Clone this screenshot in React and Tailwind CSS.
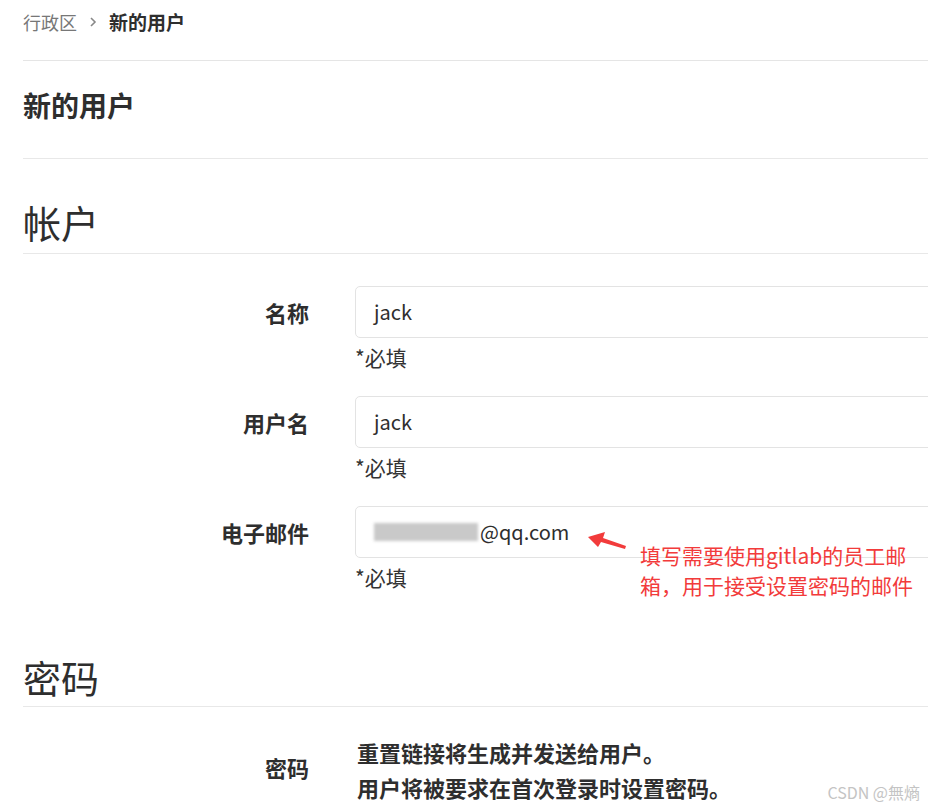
import React from "react";

const font = { fontFamily: '"Noto Sans CJK SC", "Open Sans", sans-serif' };

function Field({ label, children, help }) {
    return (
        <div className="flex items-start">
            <div className="w-[286px] shrink-0 h-[52px] flex items-center justify-end text-[22px] font-bold text-[#2e2e2e]">
                {label}
            </div>
            <div className="ml-[46px] w-[640px] shrink-0">
                <div className="h-[52px] border border-[#e3e3e3] rounded-[5px] flex items-center pl-[18px] text-[20px] text-[#2e2e2e] bg-white relative">
                    {children}
                </div>
                {help && (
                    <div className="text-[21px] leading-[30px] text-[#333] mt-[4px]">
                        {help}
                    </div>
                )}
            </div>
        </div>
    );
}

export default function App() {
    return (
        <div
            className="w-[928px] h-[809px] overflow-hidden bg-white relative pl-[23px]"
            style={font}
        >
            <div className="h-[44px] flex items-center text-[18px]">
                <span className="text-[#777]">行政区</span>
                <svg
                    className="mx-[11px]"
                    width="10"
                    height="12"
                    viewBox="0 0 10 12"
                >
                    <path
                        d="M3 2 L7 6 L3 10"
                        fill="none"
                        stroke="#888"
                        strokeWidth="1.6"
                    />
                </svg>
                <span className="font-bold text-[#2e2e2e] text-[19px]">
                    新的用户
                </span>
            </div>

            <div className="mt-[16px] border-t border-[#e5e5e5] h-[98px] flex items-center pb-[10px]">
                <h1 className="text-[28px] font-bold text-[#2e2e2e]">新的用户</h1>
            </div>

            <div className="border-t border-[#e8e8e8] h-[96px] flex items-end pb-[6px] border-b">
                <h2 className="text-[38px] leading-[50px] text-[#2e2e2e]">帐户</h2>
            </div>

            <div className="pt-[32px] flex flex-col gap-[24px]">
                <Field label="名称" help="*必填">
                    jack
                </Field>
                <Field label="用户名" help="*必填">
                    jack
                </Field>
                <Field label="电子邮件" help="*必填">
                    <span className="inline-block w-[104px] h-[18px] bg-[#c9c9c9] blur-[1.5px] mr-[2px]"></span>
                    <span>@qq.com</span>
                </Field>
            </div>

            <div className="absolute left-[585px] top-[530px]">
                <svg width="44" height="24" viewBox="0 0 44 24">
                    <polygon
                        points="3,7 20,2 18,8 41,16 40,19 16,12 13,17"
                        fill="#f23b3b"
                    />
                </svg>
            </div>
            <div className="absolute left-[640px] top-[540px] text-[21px] leading-[30px] text-[#f23b3b] w-[290px]">
                <div>填写需要使用gitlab的员工邮</div>
                <div>箱，用于接受设置密码的邮件</div>
            </div>

            <div className="h-[115px] flex items-end pb-[4px] border-b border-[#e8e8e8]">
                <h2 className="text-[38px] leading-[50px] text-[#2e2e2e]">密码</h2>
            </div>

            <div className="flex items-center pt-[28px]">
                <div className="w-[286px] shrink-0 flex justify-end text-[22px] font-bold text-[#2e2e2e] pb-[6px]">
                    密码
                </div>
                <div className="ml-[48px] text-[22px] leading-[35px] font-bold text-[#2e2e2e]">
                    <div>重置链接将生成并发送给用户。</div>
                    <div>用户将被要求在首次登录时设置密码。</div>
                </div>
            </div>

            <div className="absolute right-[8px] bottom-[5px] text-[16px] text-[#c4c4c4]">
                CSDN @無熵
            </div>
        </div>
    );
}
